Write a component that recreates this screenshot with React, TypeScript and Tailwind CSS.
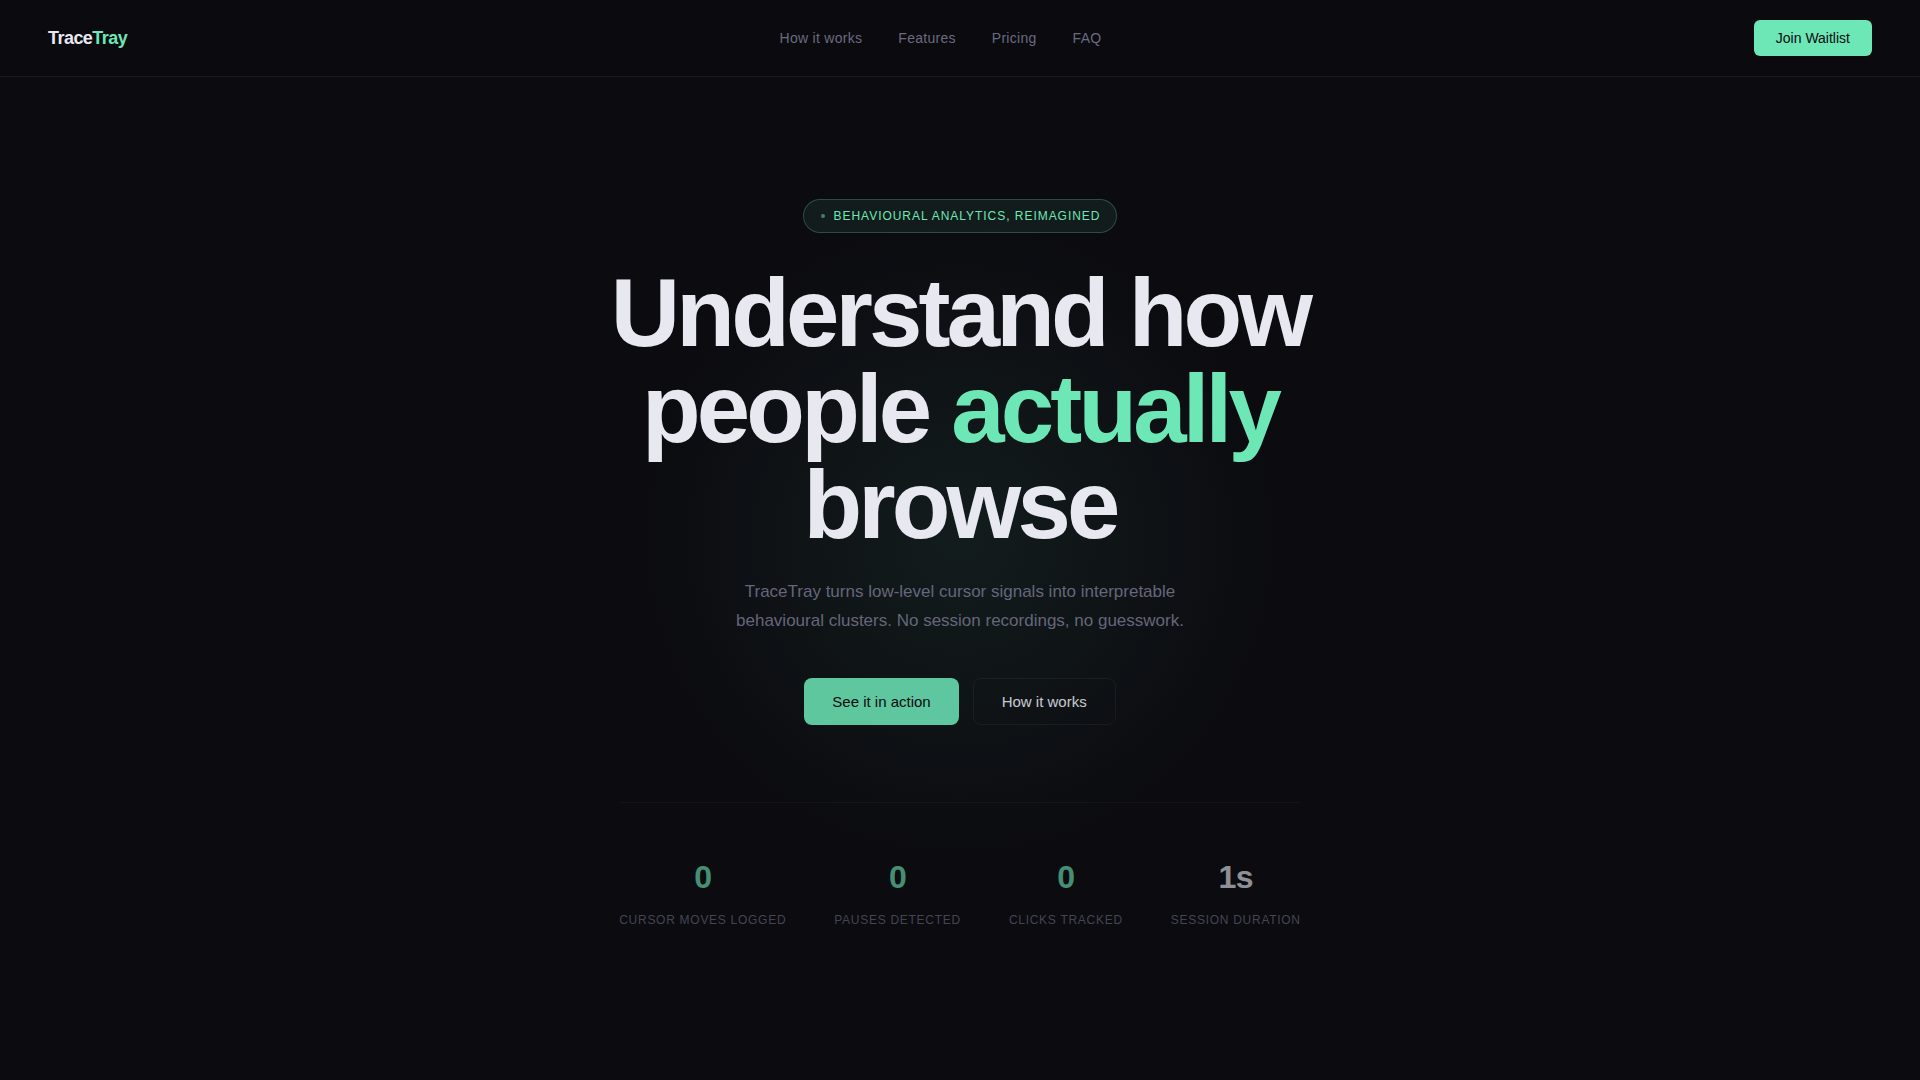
const navLinks = [
  { label: "How it works", href: "#how" },
  { label: "Features", href: "#features" },
  { label: "Pricing", href: "#pricing" },
  { label: "FAQ", href: "#faq" },
];

const stats = [
  { value: "0", label: "Cursor moves logged", color: "text-[#6ee7b7]" },
  { value: "0", label: "Pauses detected", color: "text-[#6ee7b7]" },
  { value: "0", label: "Clicks tracked", color: "text-[#6ee7b7]" },
  { value: "1s", label: "Session duration", color: "text-[#e8e8f0]" },
];

function Navbar() {
  return (
    <nav className="relative z-10 flex items-center justify-between border-b border-white/7 bg-[#0a0a0f] px-12 py-5">
      <a href="#" className="text-lg font-bold tracking-[-0.03em] text-[#e8e8f0]">
        Trace<span className="text-[#6ee7b7]">Tray</span>
      </a>
      <ul className="flex gap-9">
        {navLinks.map((link) => (
          <li key={link.label}>
            <a href={link.href} className="text-sm tracking-[0.02em] text-[#6b6b80]">
              {link.label}
            </a>
          </li>
        ))}
      </ul>
      <button type="button" className="rounded-md bg-[#6ee7b7] px-[22px] py-2 text-sm text-[#0a0a0f]">
        Join Waitlist
      </button>
    </nav>
  );
}

function Hero() {
  return (
    <section className="relative flex flex-1 flex-col items-center px-12 pt-[122px] pb-20 text-center">
      {/* soft glow behind the headline */}
      <div className="absolute inset-x-0 top-28 mx-auto size-[700px] bg-[radial-gradient(circle,rgba(110,231,183,0.08)_0%,transparent_65%)]" />
      <div className="relative flex items-center gap-2 rounded-full border border-[#6ee7b7]/25 bg-[#6ee7b7]/8 px-4 py-2 text-xs tracking-[0.08em] text-[#6ee7b7] uppercase">
        <span className="mx-px size-1 rounded-full bg-[#6ee7b7]/50" />
        Behavioural analytics, reimagined
      </div>
      <h1 className="relative mt-8 max-w-[800px] text-8xl leading-[96px] font-bold tracking-[-0.04em] text-[#e8e8f0]">
        Understand how people <span className="text-[#6ee7b7]">actually</span> browse
      </h1>
      <p className="relative mt-6 max-w-[480px] text-[17px] leading-[29px] text-[#6b6b80] opacity-95">
        TraceTray turns low-level cursor signals into interpretable behavioural clusters. No session recordings, no guesswork.
      </p>
      <div className="relative mt-[43px] flex gap-3.5 opacity-85">
        <button type="button" className="rounded-lg bg-[#6ee7b7] px-7 py-[15px] text-[15px] leading-[17px] text-[#0a0a0f]">
          See it in action
        </button>
        <button type="button" className="rounded-lg border border-white/6 px-7 text-[15px] leading-[17px] text-[#e8e8f0]">
          How it works
        </button>
      </div>
      <div className="relative mt-[77px] flex gap-12 border-t border-white/6 pt-14 opacity-60">
        {stats.map((stat) => (
          <div key={stat.label}>
            <div className={`text-[32px] leading-[37px] font-bold tracking-[-0.02em] ${stat.color}`}>{stat.value}</div>
            <div className="mt-4 text-xs tracking-[0.06em] text-[#6b6b80] uppercase">{stat.label}</div>
          </div>
        ))}
      </div>
    </section>
  );
}

export default function App() {
  return (
    <div className="flex min-h-screen flex-col bg-[#0b0b10] font-['Liberation_Sans',sans-serif]">
      <Navbar />
      <Hero />
    </div>
  );
}
